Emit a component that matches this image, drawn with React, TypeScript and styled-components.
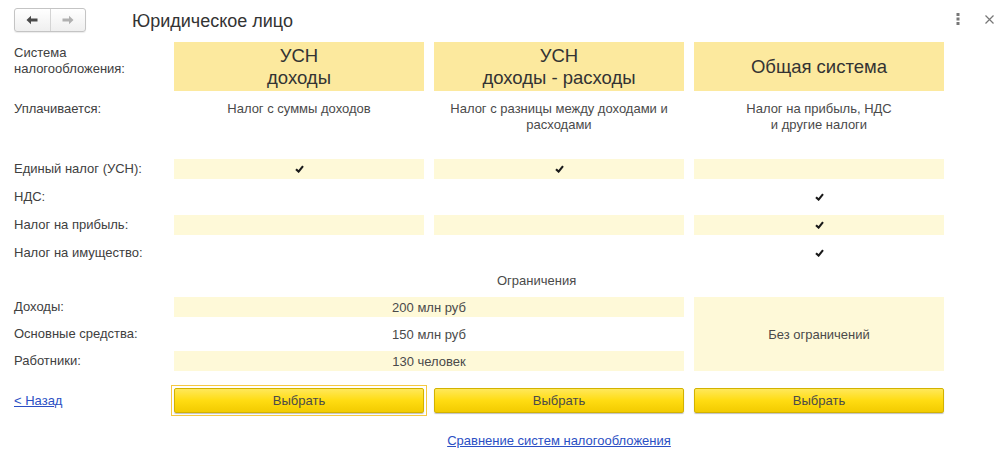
import React from "react";
import styled, { createGlobalStyle } from "styled-components";

const Global = createGlobalStyle`
  html, body { margin: 0; padding: 0; background: #fff; }
  body { font-family: "Liberation Sans", Arial, sans-serif; font-size: 13px; color: #404040; }
  * { box-sizing: border-box; }
`;

const Page = styled.div`
  width: 996px;
  height: 457px;
  padding: 0 14px;
  position: relative;
  overflow: hidden;
`;

const TopBar = styled.div`
  height: 42px;
  display: flex;
  align-items: flex-start;
  padding-top: 8px;
`;

const NavGroup = styled.div`
  display: flex;
  width: 72px;
  height: 24px;
  border: 1px solid #c4c4c4;
  border-radius: 3px;
  background: linear-gradient(#ffffff, #efefef);
  box-shadow: 0 1px 1px rgba(0, 0, 0, 0.08);
`;

const NavBtn = styled.div<{ $divider?: boolean }>`
  flex: 1;
  display: flex;
  align-items: center;
  justify-content: center;
  border-right: ${(p) => (p.$divider ? "1px solid #d4d4d4" : "none")};
`;

const Title = styled.div`
  margin-left: 46px;
  font-size: 18px;
  line-height: 24px;
  padding-top: 1px;
  color: #333;
`;

const TopIcons = styled.div`
  margin-left: auto;
  margin-right: -12px;
  display: flex;
  align-items: center;
  gap: 25px;
  height: 24px;
  margin-top: -1px;
`;

const Grid = styled.div<{ $gap: number }>`
  display: grid;
  grid-template-columns: 150px 250px 250px 250px;
  column-gap: 10px;
  row-gap: ${(p) => p.$gap}px;
`;

const Label = styled.div<{ $h: number; $top?: number }>`
  height: ${(p) => p.$h}px;
  display: flex;
  align-items: ${(p) => (p.$h > 30 ? "flex-start" : "center")};
  padding-top: ${(p) => p.$top || 0}px;
  line-height: 16px;
  color: #404040;
  white-space: nowrap;
`;

const HeadCell = styled.div`
  height: 49px;
  background: #fce99e;
  display: flex;
  flex-direction: column;
  align-items: center;
  justify-content: center;
  font-size: 18.5px;
  line-height: 22px;
  color: #333;
  text-align: center;
`;

const TextCell = styled.div`
  height: 52px;
  padding-top: 2px;
  text-align: center;
  line-height: 16px;
  color: #4a4a4a;
`;

const Cell = styled.div<{ $shade?: boolean; $span?: string; $rows?: number }>`
  height: ${(p) => (p.$rows ? "auto" : "20px")};
  grid-column: ${(p) => p.$span || "auto"};
  grid-row: ${(p) => (p.$rows ? `span ${p.$rows}` : "auto")};
  background: ${(p) => (p.$shade ? "#fef9d8" : "transparent")};
  display: flex;
  align-items: center;
  justify-content: center;
  color: #4a4a4a;
`;

const LimitsTitle = styled.div`
  height: 18px;
  margin: 8px 0 8px 0;
  padding-left: 483px;
  display: flex;
  align-items: center;
  color: #4a4a4a;
`;

const ButtonsRow = styled.div`
  display: grid;
  grid-template-columns: 150px 250px 250px 250px;
  column-gap: 10px;
  margin-top: 17px;
  height: 25px;
  align-items: center;
`;

const LinkText = styled.a`
  color: #2b4fc4;
  text-decoration: underline;
  cursor: pointer;
  line-height: 16px;
`;

const BtnWrap = styled.div<{ $focused?: boolean }>`
  position: relative;
  height: 25px;
  &::after {
    content: "";
    display: ${(p) => (p.$focused ? "block" : "none")};
    position: absolute;
    left: -3px;
    right: -3px;
    top: -3px;
    bottom: -3px;
    border: 1px solid #f5c842;
  }
`;

const YellowButton = styled.button`
  width: 100%;
  height: 25px;
  border: 1px solid #d2b200;
  border-radius: 2px;
  background: linear-gradient(#ffe85a, #ffdc12 50%, #f2cb00);
  box-shadow: 0 1px 1px rgba(0, 0, 0, 0.25);
  font-family: "Liberation Sans", Arial, sans-serif;
  font-size: 13px;
  color: #4a4a4a;
  padding: 0;
  cursor: pointer;
`;

const Footer = styled.div`
  margin-top: 20px;
  padding-left: 160px;
  width: 930px;
  display: flex;
  justify-content: center;
`;

const Check = () => (
  <svg width="9" height="8" viewBox="0 0 9 8">
    <path d="M1 4.2 L3.6 6.6 L8 1.2" fill="none" stroke="#1a1a1a" strokeWidth="2.1" strokeLinejoin="miter" />
  </svg>
);

const ArrowLeft = ({ color }: { color: string }) => (
  <svg width="12" height="10" viewBox="0 0 12 10">
    <path d="M0.5 5 L5 0.8 L5 3.6 L11.5 3.6 L11.5 6.4 L5 6.4 L5 9.2 Z" fill={color} />
  </svg>
);

const ArrowRight = ({ color }: { color: string }) => (
  <svg width="12" height="10" viewBox="0 0 12 10">
    <path d="M11.5 5 L7 0.8 L7 3.6 L0.5 3.6 L0.5 6.4 L7 6.4 L7 9.2 Z" fill={color} />
  </svg>
);

const Dots = () => (
  <svg width="4" height="12" viewBox="0 0 4 12">
    <rect x="0.5" y="0" width="3" height="3" fill="#777" />
    <rect x="0.5" y="4.5" width="3" height="3" fill="#777" />
    <rect x="0.5" y="9" width="3" height="3" fill="#777" />
  </svg>
);

const Close = () => (
  <svg width="9" height="9" viewBox="0 0 9 9">
    <path d="M0.5 0.5 L8.5 8.5 M8.5 0.5 L0.5 8.5" stroke="#777" strokeWidth="1.2" />
  </svg>
);

const taxRows: { label: string; shade: boolean; cols: boolean[] }[] = [
  { label: "Единый налог (УСН):", shade: true, cols: [true, true, false] },
  { label: "НДС:", shade: false, cols: [false, false, true] },
  { label: "Налог на прибыль:", shade: true, cols: [false, false, true] },
  { label: "Налог на имущество:", shade: false, cols: [false, false, true] },
];

const limits = [
  { label: "Доходы:", value: "200 млн руб", shade: true },
  { label: "Основные средства:", value: "150 млн руб", shade: false },
  { label: "Работники:", value: "130 человек", shade: true },
];

export default function App() {
  return (
    <>
      <Global />
      <Page>
        <TopBar>
          <NavGroup>
            <NavBtn $divider>
              <ArrowLeft color="#4a4a4a" />
            </NavBtn>
            <NavBtn>
              <ArrowRight color="#b0b0b0" />
            </NavBtn>
          </NavGroup>
          <Title>Юридическое лицо</Title>
          <TopIcons>
            <Dots />
            <Close />
          </TopIcons>
        </TopBar>

        <Grid $gap={8}>
          <Label $h={49} $top={3}>
            Система
            <br />
            налогообложения:
          </Label>
          <HeadCell>
            <span>УСН</span>
            <span>доходы</span>
          </HeadCell>
          <HeadCell>
            <span>УСН</span>
            <span>доходы - расходы</span>
          </HeadCell>
          <HeadCell>
            <span>Общая система</span>
          </HeadCell>

          <Label $h={52} $top={2}>
            Уплачивается:
          </Label>
          <TextCell>Налог с суммы доходов</TextCell>
          <TextCell>
            Налог с разницы между доходами и
            <br />
            расходами
          </TextCell>
          <TextCell>
            Налог на прибыль, НДС
            <br />и другие налоги
          </TextCell>

          {taxRows.map((r) => (
            <React.Fragment key={r.label}>
              <Label $h={20}>{r.label}</Label>
              {r.cols.map((c, i) => (
                <Cell key={i} $shade={r.shade}>
                  {c && <Check />}
                </Cell>
              ))}
            </React.Fragment>
          ))}
        </Grid>

        <LimitsTitle>Ограничения</LimitsTitle>

        <Grid $gap={7}>
          {limits.map((l, idx) => (
            <React.Fragment key={l.label}>
              <Label $h={20}>{l.label}</Label>
              <Cell $shade={l.shade} $span="span 2">
                {l.value}
              </Cell>
              {idx === 0 && (
                <Cell $shade $rows={3}>
                  Без ограничений
                </Cell>
              )}
            </React.Fragment>
          ))}
        </Grid>

        <ButtonsRow>
          <LinkText>&lt; Назад</LinkText>
          <BtnWrap $focused>
            <YellowButton>Выбрать</YellowButton>
          </BtnWrap>
          <BtnWrap>
            <YellowButton>Выбрать</YellowButton>
          </BtnWrap>
          <BtnWrap>
            <YellowButton>Выбрать</YellowButton>
          </BtnWrap>
        </ButtonsRow>

        <Footer>
          <LinkText>Сравнение систем налогообложения</LinkText>
        </Footer>
      </Page>
    </>
  );
}
